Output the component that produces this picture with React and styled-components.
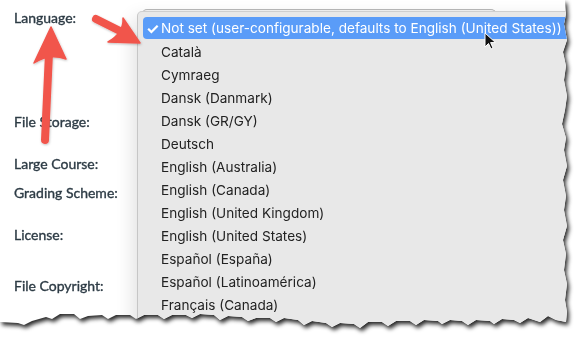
import styled, { createGlobalStyle } from "styled-components";

const GlobalStyle = createGlobalStyle`
  html, body {
    margin: 0;
    padding: 0;
    background: #ffffff;
  }
`;

const languages = [
  "Català",
  "Cymraeg",
  "Dansk (Danmark)",
  "Dansk (GR/GY)",
  "Deutsch",
  "English (Australia)",
  "English (Canada)",
  "English (United Kingdom)",
  "English (United States)",
  "Español (España)",
  "Español (Latinoamérica)",
  "Français (Canada)",
  "Français (France)",
];

const fields = [
  { label: "Language:", height: 104 },
  { label: "File Storage:", height: 42 },
  { label: "Large Course:", height: 29 },
  { label: "Grading Scheme:", height: 42 },
  { label: "License:", height: 51 },
  { label: "File Copyright:", height: 40 },
];

// jagged torn edge: right side then bottom
const tornEdge =
  "polygon(0 0, 565px 0, 566px 14px, 564px 24px, 567px 40px, 563px 52px, 566px 66px, 564px 80px, 567px 96px, 565px 110px, 562px 124px, 566px 138px, 564px 150px, 567px 166px, 563px 180px, 566px 196px, 564px 210px, 567px 226px, 563px 240px, 566px 254px, 564px 270px, 567px 284px, 565px 300px, 567px 312px, 566px 322px, 556px 320px, 548px 316px, 540px 322px, 528px 318px, 520px 323px, 514px 320px, 502px 319px, 494px 324px, 490px 321px, 476px 320px, 468px 325px, 462px 321px, 450px 320px, 442px 324px, 438px 321px, 424px 320px, 416px 325px, 410px 321px, 396px 321px, 388px 326px, 382px 322px, 368px 322px, 360px 328px, 354px 324px, 340px 323px, 332px 327px, 326px 323px, 312px 321px, 304px 325px, 298px 320px, 284px 318px, 276px 322px, 270px 318px, 256px 318px, 248px 321px, 242px 317px, 228px 316px, 220px 320px, 214px 315px, 200px 314px, 192px 318px, 186px 315px, 172px 315px, 164px 319px, 158px 315px, 144px 315px, 136px 319px, 130px 315px, 116px 315px, 108px 319px, 102px 315px, 88px 316px, 80px 319px, 74px 314px, 60px 314px, 52px 319px, 46px 317px, 32px 321px, 24px 325px, 18px 323px, 0 322px)";

const Stage = styled.div`
  width: 580px;
  height: 342px;
  overflow: hidden;
  background: #ffffff;
`;

const Shadow = styled.div`
  filter: drop-shadow(2px 3px 2px rgba(0, 0, 0, 0.85));
`;

const Paper = styled.div`
  position: relative;
  width: 580px;
  height: 342px;
  background: #ffffff;
  overflow: hidden;
  clip-path: ${tornEdge};
`;

const Form = styled.div`
  display: flex;
  flex-direction: column;
  padding: 9px 0 0 14px;
`;

const FieldRow = styled.div`
  height: ${(p) => p.$h}px;
  flex-shrink: 0;
`;

const Label = styled.span`
  font-family: Lato, "Noto Sans", sans-serif;
  font-size: 14px;
  line-height: 18px;
  color: #2d3b45;
  -webkit-text-stroke: 0.35px #2d3b45;
`;

const SelectTop = styled.div`
  position: absolute;
  left: 142px;
  top: 9px;
  width: 352px;
  height: 10px;
  border: 1px solid #b9b9b9;
  border-bottom: none;
  border-radius: 5px 5px 0 0;
  background: #f4f4f4;
`;

const Menu = styled.div`
  position: absolute;
  left: 137px;
  top: 11px;
  right: -20px;
  bottom: -20px;
  background: #e8e8e8;
  border-left: 1px solid #c6c6c6;
  border-top: 1px solid #cfcfcf;
  border-radius: 5px 0 0 0;
  box-shadow: -4px 6px 18px rgba(0, 0, 0, 0.12);
  padding: 5px 0 0 5px;
  display: flex;
  flex-direction: column;
`;

const Option = styled.div`
  height: ${(p) => (p.$selected ? 22 : 23)}px;
  margin-bottom: ${(p) => (p.$selected ? 1 : 0)}px;
  display: flex;
  align-items: center;
  padding-left: 18px;
  border-radius: 4px;
  font-family: Inter, "Liberation Sans", sans-serif;
  font-size: 13.6px;
  white-space: nowrap;
  color: ${(p) => (p.$selected ? "#ffffff" : "#222222")};
  background: ${(p) => (p.$selected ? "#5a9cf8" : "transparent")};
  position: relative;
`;

const Check = styled.span`
  position: absolute;
  left: 3px;
  font-size: 15px;
  font-weight: 700;
`;

const Overlay = styled.svg`
  position: absolute;
  left: 0;
  top: 0;
  width: 580px;
  height: 342px;
  pointer-events: none;
`;

const RedArrow = ({ tail, head, flaps }) => (
  <g filter="url(#arrowShadow)">
    <line
      x1={tail[0]}
      y1={tail[1]}
      x2={head.base[0]}
      y2={head.base[1]}
      stroke="#f1554c"
      strokeWidth="8"
      strokeLinecap="round"
    />
    <path
      d={`M${head.tip[0]} ${head.tip[1]} L${flaps[0][0]} ${flaps[0][1]} Q${head.base[0]} ${head.base[1]} ${flaps[1][0]} ${flaps[1][1]} Z`}
      fill="#f1554c"
      stroke="#f1554c"
      strokeWidth="1.5"
      strokeLinejoin="round"
    />
  </g>
);

const App = () => {
  return (
    <Stage>
      <GlobalStyle />
      <Shadow>
        <Paper>
          <Form>
            {fields.map((f) => (
              <FieldRow key={f.label} $h={f.height}>
                <Label>{f.label}</Label>
              </FieldRow>
            ))}
          </Form>
          <SelectTop />
          <Menu>
            <Option $selected>
              <Check>✓</Check>
              Not set (user-configurable, defaults to English (United States))
            </Option>
            {languages.map((l) => (
              <Option key={l}>{l}</Option>
            ))}
          </Menu>
          <Overlay viewBox="0 0 580 342">
            <defs>
              <filter id="arrowShadow" x="-20%" y="-20%" width="140%" height="140%">
                <feDropShadow dx="0.5" dy="1" stdDeviation="1" floodColor="#000" floodOpacity="0.25" />
              </filter>
            </defs>
            <RedArrow
              tail={[96, 19]}
              head={{ tip: [140, 43], base: [124, 33] }}
              flaps={[
                [123, 18],
                [108, 42],
              ]}
            />
            <RedArrow
              tail={[45, 140]}
              head={{ tip: [51, 27], base: [49, 53] }}
              flaps={[
                [66, 59],
                [34, 63],
              ]}
            />
            <path
              d="M485 33 L485 47 L488.5 43.5 L491 49 L493 48 L490.6 42.6 L495.5 42.6 Z"
              fill="#111"
              stroke="#fff"
              strokeWidth="1"
              strokeLinejoin="round"
            />
          </Overlay>
        </Paper>
      </Shadow>
    </Stage>
  );
};

export default App;
